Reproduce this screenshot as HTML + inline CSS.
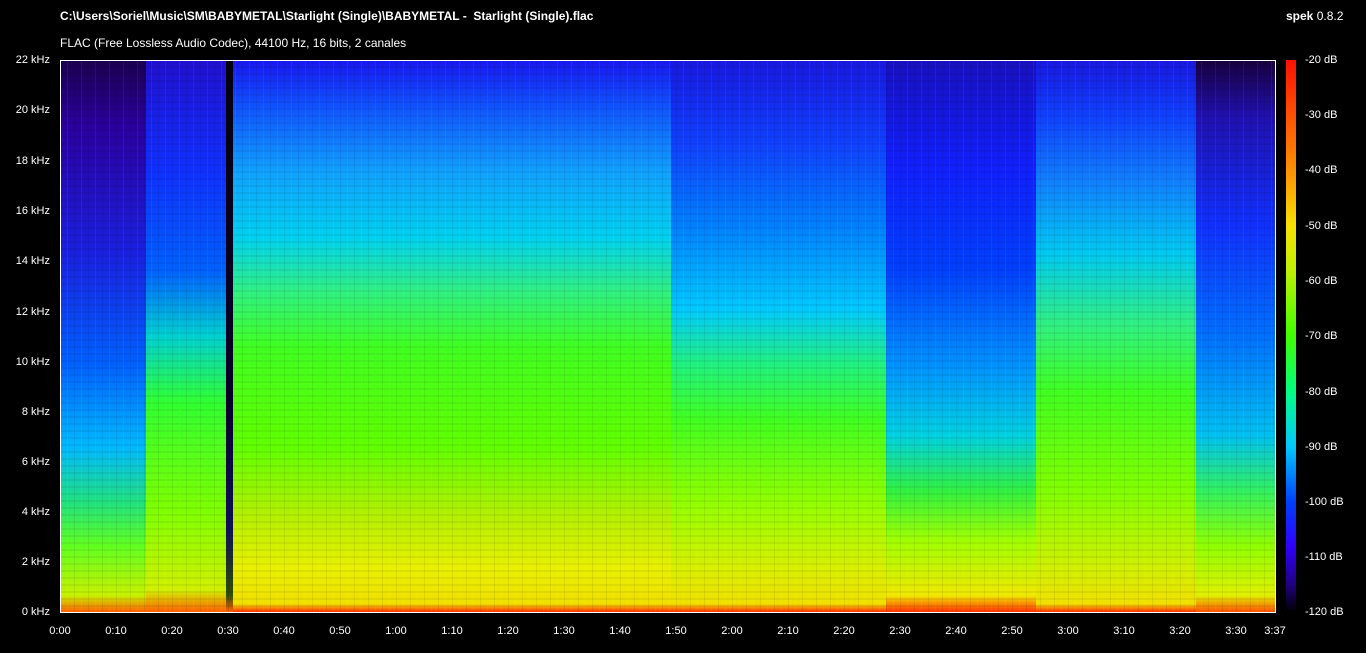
<!DOCTYPE html>
<html><head><meta charset="utf-8"><style>
body{margin:0;width:1366px;height:653px;background:#000;overflow:hidden;position:relative;font-family:"Liberation Sans",sans-serif;color:#fff;font-size:11px}
.a{position:absolute}
#plot{left:60px;top:60px;width:1214px;height:551px;border:1px solid #fff;overflow:hidden}
.seg{position:absolute;top:0;height:100%}
.yl{position:absolute;right:1316px;width:60px;text-align:right;font-size:11px}
.dl{position:absolute;left:1305px;font-size:11px}
.tl{position:absolute;top:625px;width:40px;text-align:center;margin-left:-20px;font-size:11px}
</style></head><body>
<div class="a" style="left:60px;top:9px;font-weight:bold;font-size:12px">C:\Users\Soriel\Music\SM\BABYMETAL\Starlight (Single)\BABYMETAL -&nbsp; Starlight (Single).flac</div>
<div class="a" style="left:60px;top:36px;font-size:12px">FLAC (Free Lossless Audio Codec), 44100 Hz, 16 bits, 2 canales</div>
<div class="a" style="left:1286px;top:9px;font-size:12px"><b>spek</b> 0.8.2</div>

<div id="plot" class="a">
<div class="seg" style="left:0;width:85px;background:linear-gradient(#1a0050 0%,#2a00a0 12%,#1a20e0 35%,#0060ff 55%,#00b8ff 70%,#20e080 80%,#60ff20 88%,#c8f000 97%,#ff6000 100%)"></div>
<div class="seg" style="left:85px;width:80px;background:linear-gradient(#2010d0 0%,#1030ff 20%,#0060ff 38%,#00d0d0 50%,#30ff30 62%,#80ff00 82%,#d0f000 96%,#ff6000 100%)"></div>
<div class="seg" style="left:165px;width:7px;background:linear-gradient(#050010 0%,#08002a 60%,#10105a 85%,#305000 97%,#ff6000 100%)"></div>
<div class="seg" style="left:172px;width:438px;background:linear-gradient(#1818f0 0%,#1050ff 8%,#10a0ff 20%,#00d0f0 32%,#30f080 42%,#40ff20 52%,#60ff00 70%,#b0f000 82%,#e8f000 92%,#f0e000 98.5%,#ff3000 100%)"></div>
<div class="seg" style="left:610px;width:215px;background:linear-gradient(#1818e0 0%,#1040ff 15%,#0080ff 30%,#00c8ff 45%,#20f080 55%,#40ff20 65%,#90ff00 80%,#d8f000 92%,#f0e000 98.5%,#ff3000 100%)"></div>
<div class="seg" style="left:825px;width:150px;background:linear-gradient(#1810c0 0%,#1020ff 20%,#0040ff 38%,#0090ff 55%,#00d0e0 68%,#30f040 78%,#a0ff00 87%,#f0e800 97%,#ff3000 100%)"></div>
<div class="seg" style="left:975px;width:160px;background:linear-gradient(#1818e0 0%,#1040ff 10%,#1080ff 22%,#00c8f0 35%,#30f080 48%,#40ff20 60%,#80ff00 78%,#d0f000 92%,#f0e000 98.5%,#ff3000 100%)"></div>
<div class="seg" style="left:1135px;width:80px;background:linear-gradient(#180040 0%,#2010b0 10%,#1030ff 30%,#0070ff 50%,#00c0f0 68%,#30f060 78%,#90ff00 88%,#e0f000 97%,#ff5000 100%)"></div>
<div class="seg" style="left:0;width:100%;background:repeating-linear-gradient(90deg,rgba(0,0,0,0) 0 6px,rgba(255,255,255,0.06) 6px 7px,rgba(0,0,0,0) 7px 13px,rgba(0,0,0,0.08) 13px 14px)"></div>
<div class="seg" style="left:0;width:100%;background:repeating-linear-gradient(0deg,rgba(0,0,0,0) 0 5px,rgba(0,0,0,0.06) 5px 7px)"></div>
</div>

<div class="a" style="left:1286px;top:60px;width:10px;height:552px;background:linear-gradient(#ff1000 0%,#ff5000 10%,#ff9000 20%,#f8e000 30%,#c0f000 38%,#40ff00 50%,#00ff80 60%,#00c8ff 70%,#0040ff 80%,#3000ff 88%,#200080 95%,#000 100%)"></div>

<div class="yl" style="top:54px">22 kHz</div>
<div class="yl" style="top:104px">20 kHz</div>
<div class="yl" style="top:155px">18 kHz</div>
<div class="yl" style="top:205px">16 kHz</div>
<div class="yl" style="top:255px">14 kHz</div>
<div class="yl" style="top:306px">12 kHz</div>
<div class="yl" style="top:356px">10 kHz</div>
<div class="yl" style="top:406px">8 kHz</div>
<div class="yl" style="top:456px">6 kHz</div>
<div class="yl" style="top:506px">4 kHz</div>
<div class="yl" style="top:556px">2 kHz</div>
<div class="yl" style="top:606px">0 kHz</div>

<div class="dl" style="top:54px">-20 dB</div>
<div class="dl" style="top:109px">-30 dB</div>
<div class="dl" style="top:164px">-40 dB</div>
<div class="dl" style="top:220px">-50 dB</div>
<div class="dl" style="top:275px">-60 dB</div>
<div class="dl" style="top:330px">-70 dB</div>
<div class="dl" style="top:386px">-80 dB</div>
<div class="dl" style="top:441px">-90 dB</div>
<div class="dl" style="top:496px">-100 dB</div>
<div class="dl" style="top:551px">-110 dB</div>
<div class="dl" style="top:606px">-120 dB</div>

<div class="tl" style="left:60px">0:00</div>
<div class="tl" style="left:116px">0:10</div>
<div class="tl" style="left:172px">0:20</div>
<div class="tl" style="left:228px">0:30</div>
<div class="tl" style="left:284px">0:40</div>
<div class="tl" style="left:340px">0:50</div>
<div class="tl" style="left:396px">1:00</div>
<div class="tl" style="left:452px">1:10</div>
<div class="tl" style="left:508px">1:20</div>
<div class="tl" style="left:564px">1:30</div>
<div class="tl" style="left:620px">1:40</div>
<div class="tl" style="left:676px">1:50</div>
<div class="tl" style="left:732px">2:00</div>
<div class="tl" style="left:788px">2:10</div>
<div class="tl" style="left:844px">2:20</div>
<div class="tl" style="left:900px">2:30</div>
<div class="tl" style="left:956px">2:40</div>
<div class="tl" style="left:1012px">2:50</div>
<div class="tl" style="left:1068px">3:00</div>
<div class="tl" style="left:1124px">3:10</div>
<div class="tl" style="left:1180px">3:20</div>
<div class="tl" style="left:1236px">3:30</div>
<div class="tl" style="left:1275px">3:37</div>
</body></html>
